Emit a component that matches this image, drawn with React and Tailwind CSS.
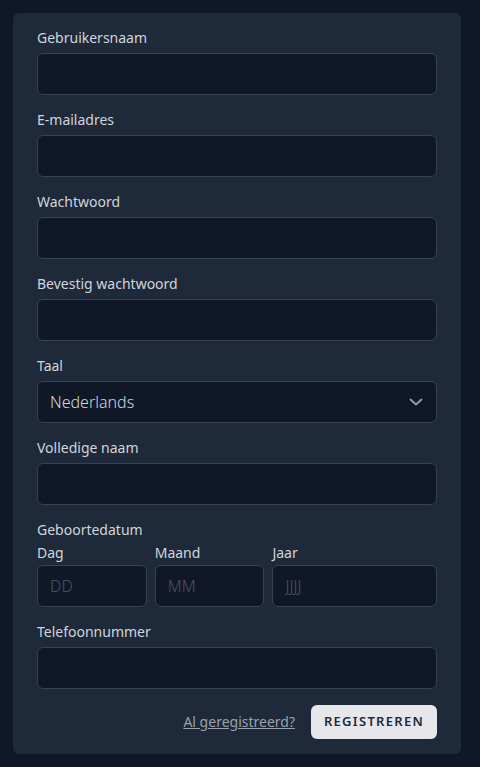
const fields = [
  { label: 'Gebruikersnaam', type: 'text' },
  { label: 'E-mailadres', type: 'email' },
  { label: 'Wachtwoord', type: 'password' },
  { label: 'Bevestig wachtwoord', type: 'password' },
]

function Field({ label, type = 'text' }) {
  return (
    <div className="flex flex-col">
      <label className="text-sm leading-5 text-gray-300 mb-[5px]">{label}</label>
      <input
        type={type}
        className="h-[42px] w-full rounded-md border border-gray-700 bg-gray-900 px-3 text-base text-gray-300 focus:outline-none"
      />
    </div>
  )
}

function DatePart({ label, placeholder }) {
  return (
    <div className="flex flex-col min-w-0">
      <label className="text-sm leading-5 text-gray-300 mb-[2px]">{label}</label>
      <input
        type="text"
        placeholder={placeholder}
        className="h-[42px] w-full rounded-md border border-gray-700 bg-gray-900 px-3 text-base font-light text-gray-300 placeholder:text-gray-600 focus:outline-none"
      />
    </div>
  )
}

export default function App() {
  return (
    <div className="min-h-[767px] bg-gray-900 p-[13px] font-['Noto_Sans',sans-serif]">
      <form className="w-[448px] rounded-md bg-gray-800 px-6 pt-[15px] pb-[15px] flex flex-col gap-[15px]">
        {fields.map(f => <Field key={f.label} {...f} />)}

        <div className="flex flex-col">
          <label className="text-sm leading-5 text-gray-300 mb-[5px]">Taal</label>
          <div className="relative">
            <select className="h-[42px] w-full appearance-none rounded-md border border-gray-700 bg-gray-900 px-3 text-base font-light text-gray-300 focus:outline-none">
              <option>Nederlands</option>
            </select>
            <svg className="pointer-events-none absolute right-[9px] top-1/2 -translate-y-1/2 text-gray-400" width="24" height="24" viewBox="0 0 24 24" fill="none" stroke="currentColor" strokeWidth="1.75" strokeLinecap="round" strokeLinejoin="round">
              <polyline points="6.5 9.5 12 14.5 17.5 9.5" />
            </svg>
          </div>
        </div>

        <Field label="Volledige naam" />

        <div className="flex flex-col">
          <span className="text-sm leading-5 text-gray-300 mb-[3px]">Geboortedatum</span>
          <div className="grid grid-cols-[2fr_2fr_3fr] gap-2">
            <DatePart label="Dag" placeholder="DD" />
            <DatePart label="Maand" placeholder="MM" />
            <DatePart label="Jaar" placeholder="JJJJ" />
          </div>
        </div>

        <Field label="Telefoonnummer" type="tel" />

        <div className="flex items-center justify-end gap-4 pt-[1px]">
          <a href="#" className="text-sm text-gray-400 underline">Al geregistreerd?</a>
          <button type="button" className="h-[34px] w-[126px] rounded-md bg-gray-200 text-[13px] font-semibold tracking-widest text-gray-800">
            REGISTREREN
          </button>
        </div>
      </form>
    </div>
  )
}
